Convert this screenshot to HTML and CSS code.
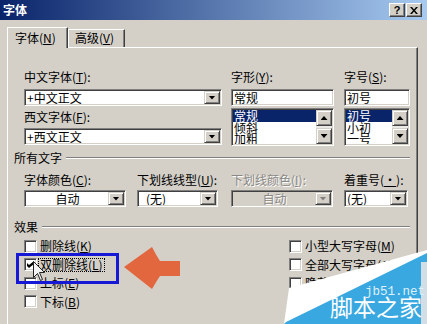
FILE: index.html
```html
<!DOCTYPE html>
<html lang="zh-CN">
<head>
    <meta charset="UTF-8">
    <title>字体</title>
    <link rel="stylesheet" href="styles.css">
</head>
<body>
<div class="dialog">
    <div class="titlebar">
        <span class="title">字体</span>
        <div class="caption-buttons">
            <span class="cap-btn help">?</span>
            <span class="cap-btn"><svg width="8" height="7" viewBox="0 0 8 7"><path d="M0 0h2l2 2.5L6 0h2L5 3.5 8 7H6L4 4.5 2 7H0l3-3.5z" fill="#000"/></svg></span>
        </div>
    </div>

    <div class="tabs">
        <div class="tab active">字体(<u>N</u>)</div>
        <div class="tab">高级(<u>V</u>)</div>
    </div>

    <div class="panel">
        <!-- font face / style / size -->
        <div class="font-grid">
            <div class="col col-face">
                <label class="lbl">中文字体(<u>T</u>):</label>
                <div class="combo"><span class="combo-text">+中文正文</span><span class="drop"></span></div>
                <label class="lbl lbl-second">西文字体(<u>F</u>):</label>
                <div class="combo"><span class="combo-text">+西文正文</span><span class="drop"></span></div>
            </div>
            <div class="col col-style">
                <label class="lbl">字形(<u>Y</u>):</label>
                <div class="edit">常规</div>
                <div class="listbox">
                    <div class="items">
                        <div class="item sel">常规</div>
                        <div class="item">倾斜</div>
                        <div class="item">加粗</div>
                    </div>
                    <div class="vscroll"><span class="sbtn up"></span><span class="track"></span><span class="sbtn down"></span></div>
                </div>
            </div>
            <div class="col col-size">
                <label class="lbl">字号(<u>S</u>):</label>
                <div class="edit">初号</div>
                <div class="listbox">
                    <div class="items">
                        <div class="item sel">初号</div>
                        <div class="item">小初</div>
                        <div class="item">一号</div>
                    </div>
                    <div class="vscroll"><span class="sbtn up"></span><span class="track"></span><span class="sbtn down"></span></div>
                </div>
            </div>
        </div>

        <!-- all text -->
        <div class="group-head"><span>所有文字</span><span class="rule"></span></div>
        <div class="color-row">
            <div class="field w-color">
                <label class="lbl">字体颜色(<u>C</u>):</label>
                <div class="combo"><span class="combo-text center">自动</span><span class="drop"></span></div>
            </div>
            <div class="field w-uline">
                <label class="lbl">下划线线型(<u>U</u>):</label>
                <div class="combo"><span class="combo-text pad-wide">(无)</span><span class="drop"></span></div>
            </div>
            <div class="field w-ucolor">
                <label class="lbl disabled">下划线颜色(<u>I</u>):</label>
                <div class="combo disabled"><span class="combo-text center">自动</span><span class="drop"></span></div>
            </div>
            <div class="field w-emph">
                <label class="lbl">着重号(<u>·</u>):</label>
                <div class="combo"><span class="combo-text">(无)</span><span class="drop"></span></div>
            </div>
        </div>

        <!-- effects -->
        <div class="group-head effects-head"><span>效果</span><span class="rule"></span></div>
        <div class="effects">
            <div class="check-col left">
                <div class="check"><span class="box"></span>删除线(<u>K</u>)</div>
                <div class="check"><span class="box"><svg width="7" height="7" viewBox="0 0 7 7"><path d="M0 2l2 2 5-4v3L2 7 0 5z" fill="#000"/></svg></span><span class="focus-text">双删除线(<u>L</u>)</span></div>
                <div class="check"><span class="box"></span>上标(<u>E</u>)</div>
                <div class="check"><span class="box"></span>下标(<u>B</u>)</div>
            </div>
            <div class="check-col">
                <div class="check"><span class="box"></span>小型大写字母(<u>M</u>)</div>
                <div class="check"><span class="box"></span>全部大写字母(<u>A</u>)</div>
                <div class="check"><span class="box"></span>隐藏(<u>H</u>)</div>
            </div>
        </div>
    </div>

    <!-- annotations over the screenshot -->
    <div class="mark-box"></div>
    <svg class="mark-arrow" width="64" height="50" viewBox="0 0 64 50">
        <path d="M4 23 L32 3 Q36 11 40 17 L60 17 L60 32 L40 32 Q36 38 32 45 Z" fill="#e2663e"/>
    </svg>
    <svg class="cursor" width="13" height="21" viewBox="0 0 13 21">
        <path d="M0.5 0.5 V16.5 L4.5 12.5 L7.5 19.5 L9.5 18.5 L6.5 11.5 L11.5 11.5 Z" fill="#f2f2f2" stroke="#222" stroke-width="1"/>
    </svg>
    <svg class="watermark" width="147" height="76" viewBox="0 0 147 76">
        <polygon points="147,2 9,40 4,76 147,76" fill="#ffffff"/>
        <polygon points="147,5 6,74 4,76 141,76 141,14 147,14" fill="#3aa8e0"/>
        <rect x="141" y="14" width="6" height="62" fill="#d2dee6"/>
        <text x="85" y="47" class="wm-url">jb51.net</text>
        <text x="50" y="68" class="wm-name">脚本之家</text>
    </svg>
</div>
</body>
</html>
```

FILE: styles.css
```css
* {
    margin: 0;
    padding: 0;
    box-sizing: border-box;
}

body {
    width: 427px;
    height: 324px;
    overflow: hidden;
    background: #d4d0c8;
    font-family: "Noto Sans CJK SC", "Liberation Sans", sans-serif;
    font-size: 12px;
    line-height: 14px;
    color: #000;
}

u {
    text-decoration: underline;
}

.dialog {
    position: relative;
    width: 427px;
    height: 324px;
}

/* title bar */
.titlebar {
    height: 20px;
    display: flex;
    align-items: center;
    justify-content: space-between;
    padding: 0 5px 0 3px;
    background: linear-gradient(to right, #0a246a, #a6caf0);
}

.title {
    color: #fff;
    font-weight: bold;
    font-size: 12px;
    line-height: 16px;
}

.caption-buttons {
    display: flex;
    gap: 1px;
}

.cap-btn {
    width: 16px;
    height: 14px;
    display: flex;
    align-items: center;
    justify-content: center;
    background: #d4d0c8;
    border: 1px solid;
    border-color: #fff #404040 #404040 #fff;
    box-shadow: inset -1px -1px #808080;
    font: bold 11px/12px "Liberation Sans", sans-serif;
}

/* tabs */
.tabs {
    display: flex;
    align-items: flex-end;
    height: 21px;
    margin-top: 7px;
    padding-left: 7px;
}

.tab {
    width: 57px;
    height: 18px;
    margin-bottom: 1px;
    padding: 1px 0 0 6px;
    background: #d4d0c8;
    border: 1px solid;
    border-color: #fff #404040 transparent #fff;
    border-bottom: none;
    box-shadow: inset -1px 0 #808080;
    white-space: nowrap;
}

.tab.active {
    position: relative;
    z-index: 2;
    width: 61px;
    height: 21px;
    margin-bottom: 0;
    padding: 3px 0 0 7px;
}

/* tab page */
.panel {
    width: 411px;
    height: 290px;
    margin: -1px 0 0 7px;
    padding: 22px 7px 0 6px;
    border-top: 1px solid #fff;
    border-left: 1px solid #fff;
    border-right: 1px solid #404040;
    box-shadow: inset -1px 0 #808080;
}

.lbl {
    display: block;
    white-space: nowrap;
}

.lbl.disabled {
    color: #8a8884;
    text-shadow: 1px 1px #fff;
}

.font-grid {
    display: flex;
    align-items: flex-start;
    margin-left: 10px;
}

.col {
    display: flex;
    flex-direction: column;
}

.col .lbl {
    margin-bottom: 5px;
}

.col .lbl-second {
    margin: 4px 0 4px;
}

.col-face {
    width: 198px;
    margin-right: 9px;
}

.col-style {
    width: 103px;
    margin-right: 10px;
}

.col-size {
    width: 66px;
}

/* sunken fields */
.combo,
.edit,
.listbox,
.box {
    background: #fff;
    border: 1px solid;
    border-color: #808080 #fff #fff #808080;
    box-shadow: inset 1px 1px #404040, inset -1px -1px #d4d0c8;
}

.combo {
    display: flex;
    height: 17px;
    padding: 1px;
}

.combo.disabled {
    background: #d4d0c8;
}

.combo-text {
    flex: 1;
    padding-left: 1px;
    line-height: 13px;
    white-space: nowrap;
    overflow: hidden;
}

.combo-text.center {
    text-align: center;
}

.combo-text.pad-wide {
    padding-left: 7px;
}

.combo.disabled .combo-text {
    color: #8a8884;
    text-shadow: 1px 1px #fff;
}

.drop,
.sbtn {
    display: flex;
    align-items: center;
    justify-content: center;
    width: 16px;
    height: 13px;
    flex: none;
    background: #d4d0c8;
    border: 1px solid;
    border-color: #d4d0c8 #404040 #404040 #d4d0c8;
    box-shadow: inset 1px 1px #fff, inset -1px -1px #808080;
}

.drop::after,
.sbtn::after {
    content: "";
    width: 7px;
    height: 4px;
    background: #000;
    clip-path: polygon(0 0, 100% 0, 50% 100%);
}

.combo.disabled .drop::after {
    background: #808080;
}

.edit {
    height: 17px;
    padding: 1px 2px;
    line-height: 13px;
}

.listbox {
    display: flex;
    height: 38px;
    margin-top: 2px;
    padding: 1px;
}

.items {
    flex: 1;
    overflow: hidden;
}

.item {
    padding-left: 1px;
    line-height: 11.5px;
}

.item.sel {
    background: #0a246a;
    color: #fff;
}

.vscroll {
    display: flex;
    flex-direction: column;
    width: 16px;
}

.sbtn {
    height: 16px;
}

.sbtn.up::after {
    clip-path: polygon(50% 0, 100% 100%, 0 100%);
}

.track {
    flex: 1;
    background: #ebe9e5;
}

/* group headers */
.group-head {
    display: flex;
    align-items: center;
    gap: 4px;
    height: 14px;
    margin-top: 5px;
    white-space: nowrap;
}

.rule {
    flex: 1;
    height: 2px;
    border-top: 1px solid #808080;
    border-bottom: 1px solid #fff;
}

.effects-head {
    margin-top: 13px;
}

.color-row {
    display: flex;
    margin: 8px 0 0 10px;
}

.field .combo {
    margin-top: 3px;
}

.w-color {
    width: 102px;
    margin-right: 11px;
}

.w-uline {
    width: 81px;
    margin-right: 13px;
}

.w-ucolor {
    width: 102px;
    margin-right: 11px;
}

.w-emph {
    width: 64px;
}

/* effects */
.effects {
    display: flex;
    margin: 5px 0 0 10px;
}

.check-col {
    display: flex;
    flex-direction: column;
    gap: 4.5px;
}

.check-col.left {
    width: 265px;
}

.check {
    display: flex;
    align-items: center;
    height: 14px;
    white-space: nowrap;
}

.box {
    display: flex;
    align-items: center;
    justify-content: center;
    width: 13px;
    height: 13px;
    flex: none;
    margin-right: 3px;
}

.focus-text {
    margin-left: -2px;
    padding: 0 1px;
    border: 1px dotted #000;
    line-height: 12px;
}

/* annotations */
.mark-box {
    position: absolute;
    left: 16px;
    top: 253px;
    width: 103px;
    height: 31px;
    border: 3px solid #1717d6;
}

.mark-arrow {
    position: absolute;
    left: 120px;
    top: 244px;
}

.cursor {
    position: absolute;
    left: 33px;
    top: 261px;
}

.watermark {
    position: absolute;
    left: 280px;
    top: 248px;
}

.wm-url {
    font-family: "Liberation Mono", monospace;
    font-size: 12.5px;
    fill: #dff0fb;
}

.wm-name {
    font-family: "Noto Sans CJK SC", sans-serif;
    font-size: 23px;
    fill: #fff;
}
```
